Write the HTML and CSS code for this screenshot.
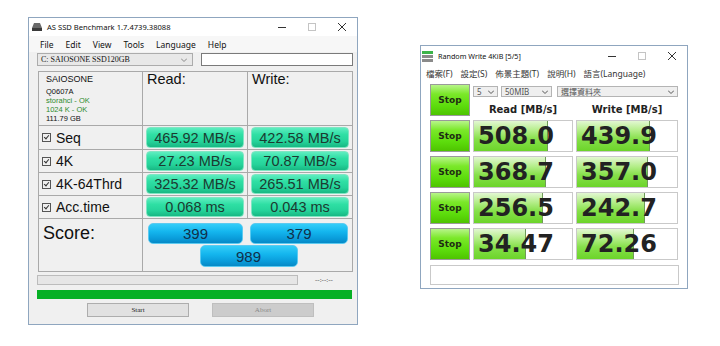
FILE: index.html
```html
<!DOCTYPE html>
<html lang="en">
<head>
    <meta charset="UTF-8">
    <title>AS SSD / CrystalDiskMark</title>
    <link rel="stylesheet" href="styles.css">
</head>
<body>
    <!-- AS SSD Benchmark window -->
    <div class="win as-win">
        <div class="titlebar">
            <svg class="app-icon" width="10" height="10" viewBox="0 0 10 10">
                <polygon points="2,1 8,1 10,6 0,6" fill="#6a6a6a"/>
                <rect x="0" y="6" width="10" height="3" fill="#3a3a3a"/>
            </svg>
            <span class="title">AS SSD Benchmark 1.7.4739.38088</span>
            <div class="controls">
                <span class="ctl"><svg width="8" height="8" viewBox="0 0 8 8"><line x1="0" y1="4.5" x2="8" y2="4.5" stroke="#333"/></svg></span>
                <span class="ctl"><svg width="8" height="8" viewBox="0 0 8 8"><rect x="0.5" y="0.5" width="7" height="7" fill="none" stroke="#c4c4c4"/></svg></span>
                <span class="ctl"><svg width="8" height="8" viewBox="0 0 8 8"><path d="M0 0L8 8M8 0L0 8" stroke="#333"/></svg></span>
            </div>
        </div>
        <div class="menubar as-menu">
            <span>File</span><span>Edit</span><span>View</span><span>Tools</span><span>Language</span><span>Help</span>
        </div>
        <div class="as-body">
            <div class="drive-row">
                <div class="drive-select">
                    <span>C: SAIOSONE SSD120GB</span>
                    <svg width="6" height="4" viewBox="0 0 6 4"><polyline points="0,0.5 3,3.5 6,0.5" fill="none" stroke="#888"/></svg>
                </div>
                <div class="drive-path"></div>
            </div>

            <div class="as-grid">
                <div class="cell info">
                    <div class="model">SAIOSONE</div>
                    <div class="line">Q0607A</div>
                    <div class="line ok">storahci - OK</div>
                    <div class="line ok">1024 K - OK</div>
                    <div class="line">111.79 GB</div>
                </div>
                <div class="cell head">Read:</div>
                <div class="cell head">Write:</div>

                <div class="cell label"><span class="chk"></span>Seq</div>
                <div class="cell"><div class="bar">465.92 MB/s</div></div>
                <div class="cell"><div class="bar">422.58 MB/s</div></div>

                <div class="cell label"><span class="chk"></span>4K</div>
                <div class="cell"><div class="bar">27.23 MB/s</div></div>
                <div class="cell"><div class="bar">70.87 MB/s</div></div>

                <div class="cell label"><span class="chk"></span>4K-64Thrd</div>
                <div class="cell"><div class="bar">325.32 MB/s</div></div>
                <div class="cell"><div class="bar">265.51 MB/s</div></div>

                <div class="cell label"><span class="chk"></span>Acc.time</div>
                <div class="cell"><div class="bar">0.068 ms</div></div>
                <div class="cell"><div class="bar">0.043 ms</div></div>

                <div class="cell score-label">Score:</div>
                <div class="cell score-area">
                    <div class="score-top">
                        <div class="score read">399</div>
                        <div class="score write">379</div>
                    </div>
                    <div class="score total">989</div>
                </div>
            </div>

            <div class="progress-row">
                <div class="progress"></div>
                <span class="time">--:--:--</span>
            </div>
            <div class="done-bar"></div>
            <div class="btn-row">
                <button class="as-btn">Start</button>
                <button class="as-btn abort">Abort</button>
            </div>
        </div>
    </div>

    <!-- CrystalDiskMark window -->
    <div class="win cdm-win">
        <div class="titlebar cdm-title">
            <svg class="app-icon" width="11" height="11" viewBox="0 0 11 11">
                <rect x="0" y="0" width="11" height="3" fill="#3cb44a"/>
                <rect x="0" y="4" width="11" height="3" fill="#8a8a8a"/>
                <rect x="0" y="8" width="11" height="3" fill="#8a8a8a"/>
            </svg>
            <span class="title">Random Write 4KiB [5/5]</span>
            <div class="controls">
                <span class="ctl"><svg width="8" height="8" viewBox="0 0 8 8"><line x1="0" y1="4.5" x2="8" y2="4.5" stroke="#333"/></svg></span>
                <span class="ctl"><svg width="8" height="8" viewBox="0 0 8 8"><rect x="0.5" y="0.5" width="7" height="7" fill="none" stroke="#c4c4c4"/></svg></span>
                <span class="ctl"><svg width="8" height="8" viewBox="0 0 8 8"><path d="M0 0L8 8M8 0L0 8" stroke="#333"/></svg></span>
            </div>
        </div>
        <div class="menubar cdm-menu">
            <span>檔案(F)</span><span>設定(S)</span><span>佈景主題(T)</span><span>說明(H)</span><span>語言(Language)</span>
        </div>
        <div class="cdm-body">
            <div class="cdm-grid">
                <div class="stop">Stop</div>
                <div class="cdm-top">
                    <div class="combo-row">
                        <div class="combo c-count">5<svg width="6" height="4" viewBox="0 0 6 4"><polyline points="0,0.5 3,3.5 6,0.5" fill="none" stroke="#555"/></svg></div>
                        <div class="combo c-size">50MIB<svg width="6" height="4" viewBox="0 0 6 4"><polyline points="0,0.5 3,3.5 6,0.5" fill="none" stroke="#555"/></svg></div>
                        <div class="combo c-drive">選擇資料夾<svg width="6" height="4" viewBox="0 0 6 4"><polyline points="0,0.5 3,3.5 6,0.5" fill="none" stroke="#555"/></svg></div>
                    </div>
                    <div class="head-row">
                        <span>Read [MB/s]</span>
                        <span>Write [MB/s]</span>
                    </div>
                </div>

                <div class="stop">Stop</div>
                <div class="val"><div class="fill" style="width: 73px"></div><span>508.0</span></div>
                <div class="val"><div class="fill" style="width: 72px"></div><span>439.9</span></div>

                <div class="stop">Stop</div>
                <div class="val"><div class="fill" style="width: 71px"></div><span>368.7</span></div>
                <div class="val"><div class="fill" style="width: 70px"></div><span>357.0</span></div>

                <div class="stop">Stop</div>
                <div class="val"><div class="fill" style="width: 68px"></div><span>256.5</span></div>
                <div class="val"><div class="fill" style="width: 67px"></div><span>242.7</span></div>

                <div class="stop">Stop</div>
                <div class="val"><div class="fill" style="width: 51px"></div><span>34.47</span></div>
                <div class="val"><div class="fill" style="width: 56px"></div><span>72.26</span></div>
            </div>
            <div class="comment"></div>
        </div>
    </div>
</body>
</html>
```

FILE: styles.css
```css
body {
    margin: 0;
    width: 720px;
    height: 346px;
    background-color: #fff;
    position: relative;
    overflow: hidden;
    font-family: "Liberation Sans", Arial, sans-serif;
}
.win {
    position: absolute;
    box-sizing: border-box;
    border: 1px solid #8fa6bf;
    background-color: #f0f0f0;
}
.as-win {
    left: 28px;
    top: 17px;
    width: 330px;
    height: 308px;
}
.cdm-win {
    left: 420px;
    top: 45px;
    width: 268px;
    height: 244px;
    background-color: #fff;
}
.titlebar {
    display: flex;
    align-items: center;
    height: 18px;
    background-color: #fff;
    font-family: "Noto Sans", sans-serif;
    font-size: 7.6px;
    color: #111;
}
.app-icon {
    margin: 0 5px 0 3px;
    flex: none;
}
.controls {
    margin-left: auto;
    display: flex;
}
.ctl {
    width: 30px;
    display: flex;
    justify-content: center;
    align-items: center;
}
.menubar {
    display: flex;
    align-items: center;
    font-family: "Noto Sans", sans-serif;
    color: #111;
}
.as-menu {
    height: 16px;
    gap: 12px;
    padding-left: 11px;
    font-size: 8.5px;
    background-color: #f7f7f7;
}
.as-body {
    padding: 1px 4px 0 8px;
}
.drive-row {
    display: flex;
    gap: 8px;
    height: 13px;
}
.drive-select {
    box-sizing: border-box;
    width: 156px;
    display: flex;
    align-items: center;
    justify-content: space-between;
    padding: 0 5px 0 3px;
    background-color: #e8e8e8;
    border: 1px solid #acacac;
    font-family: "Liberation Serif", serif;
    font-size: 8px;
    color: #111;
}
.drive-path {
    flex: 1;
    background-color: #fff;
    border: 1px solid #7a7a7a;
}
.as-grid {
    display: grid;
    grid-template-columns: 103px 104px 104px;
    grid-template-rows: 53px 23px 22px 22px 22px 52px;
    gap: 1px;
    width: 313px;
    margin: 5px 0 0 1px;
    background-color: #a9a9a9;
    border: 1px solid #a9a9a9;
}
.cell {
    background-color: #f0f0f0;
    padding: 1px 3px;
    box-sizing: border-box;
}
.info {
    padding: 1px 0 0 7px;
    color: #111;
}
.model {
    font-size: 9px;
    line-height: 12px;
}
.line {
    font-size: 7.5px;
    line-height: 9px;
}
.info .line:nth-child(2) {
    margin-top: 2px;
}
.ok {
    color: #2e8b2e;
}
.head {
    padding: 0 4px;
    font-size: 14.5px;
    line-height: 15px;
    color: #111;
}
.label {
    display: flex;
    align-items: center;
    gap: 5px;
    font-size: 14px;
    color: #111;
}
.chk {
    width: 7px;
    height: 7px;
    border: 1px solid #555;
    position: relative;
    flex: none;
}
.chk::after {
    content: "";
    position: absolute;
    left: 2px;
    top: 0;
    width: 2px;
    height: 4px;
    border: solid #333;
    border-width: 0 1px 1px 0;
    transform: rotate(40deg);
}
.bar {
    height: 100%;
    box-sizing: border-box;
    border-radius: 4px;
    border: 1px solid #7fe6c2;
    background: linear-gradient(to bottom, #5eedc0 0%, #2fdfa4 35%, #25d39a 70%, #18b883 100%);
    display: flex;
    align-items: center;
    justify-content: center;
    font-size: 14.5px;
    color: #1c3a31;
}
.score-label {
    padding: 4px 0 0 4px;
    font-size: 18px;
    line-height: 20px;
    color: #111;
}
.score-area {
    grid-column: span 2;
    padding: 4px 3px 0 5px;
}
.score-top {
    display: flex;
    gap: 7px;
}
.score {
    box-sizing: border-box;
    height: 21px;
    border-radius: 5px;
    border: 1px solid #5ccaf0;
    background: linear-gradient(to bottom, #34cdf8 0%, #14b6ee 40%, #0a9ddb 75%, #0689c6 100%);
    display: flex;
    align-items: center;
    justify-content: center;
    font-size: 15px;
    color: #10304a;
}
.score.read {
    width: 95px;
}
.score.write {
    width: 98px;
}
.score.total {
    width: 98px;
    height: 22px;
    margin: 1px auto 0;
}
.progress-row {
    display: flex;
    align-items: center;
    margin-top: 3px;
    height: 10px;
}
.progress {
    width: 261px;
    height: 10px;
    box-sizing: border-box;
    background-color: #e6e6e6;
    border: 1px solid #bcbcbc;
}
.time {
    margin-left: 17px;
    font-family: "Liberation Serif", serif;
    font-size: 7px;
    color: #444;
}
.done-bar {
    width: 315px;
    height: 9px;
    margin-top: 5px;
    background-color: #06b025;
}
.btn-row {
    display: flex;
    gap: 23px;
    margin: 4px 0 0 50px;
}
.as-btn {
    width: 102px;
    height: 14px;
    padding: 0;
    background-color: #e1e1e1;
    border: 1px solid #adadad;
    font-family: "Liberation Serif", serif;
    font-size: 7px;
    color: #222;
}
.as-btn.abort {
    background-color: #cccccc;
    border-color: #bfbfbf;
    color: #8a8a8a;
}

/* CrystalDiskMark */
.cdm-title {
    height: 20px;
    font-size: 7.2px;
}
.cdm-title .app-icon {
    margin-left: 1px;
}
.cdm-menu {
    height: 14px;
    gap: 8px;
    padding-left: 5px;
    font-family: "Noto Sans", "Noto Sans CJK TC", sans-serif;
    font-size: 8.5px;
    color: #333;
}
.cdm-body {
    padding: 4px 8px 0 9px;
}
.cdm-grid {
    display: grid;
    grid-template-columns: 40px 100px 102px;
    grid-auto-rows: 32px;
    column-gap: 3px;
    row-gap: 4px;
}
.stop {
    box-sizing: border-box;
    border: 1px solid #9a9a9a;
    background: linear-gradient(to bottom, #b8f58a 0%, #7be82a 30%, #5cdc0c 70%, #4ec400 100%);
    display: flex;
    align-items: center;
    justify-content: center;
    font-family: "DejaVu Sans", sans-serif;
    font-weight: bold;
    font-size: 9px;
    color: #1e2e12;
}
.cdm-top {
    grid-column: span 2;
    padding-top: 2px;
}
.combo-row {
    display: flex;
    height: 11px;
}
.combo {
    box-sizing: border-box;
    display: flex;
    align-items: center;
    justify-content: space-between;
    padding: 0 3px;
    background-color: #efefef;
    border: 1px solid #b4b4b4;
    font-family: "Noto Sans", "Noto Sans CJK TC", sans-serif;
    font-size: 8px;
    color: #555;
}
.c-count {
    width: 25px;
}
.c-size {
    width: 51px;
    margin-left: 3px;
}
.c-drive {
    width: 121px;
    margin-left: 5px;
}
.head-row {
    display: flex;
    margin-top: 6px;
    line-height: 13px;
    font-family: "DejaVu Sans", sans-serif;
    font-weight: bold;
    font-size: 10px;
    color: #222;
}
.head-row span {
    width: 100px;
    text-align: center;
}
.head-row span + span {
    width: 102px;
    margin-left: 3px;
}
.val {
    position: relative;
    box-sizing: border-box;
    border: 1px solid #c9c9c9;
    background-color: #fff;
    display: flex;
    align-items: center;
    padding-left: 4px;
    font-family: "DejaVu Sans", sans-serif;
    font-weight: bold;
    font-size: 24px;
    color: #222;
}
.fill {
    position: absolute;
    left: 0;
    top: 0;
    bottom: 0;
    border-right: 1px solid #6f9a58;
    background: linear-gradient(to bottom, #e2f7d2 0%, #b6ee8c 30%, #86e04a 60%, #6cd42a 100%);
}
.val span {
    position: relative;
}
.comment {
    height: 20px;
    margin-top: 5px;
    box-sizing: border-box;
    border: 1px solid #c9c9c9;
    background-color: #fff;
}
```
